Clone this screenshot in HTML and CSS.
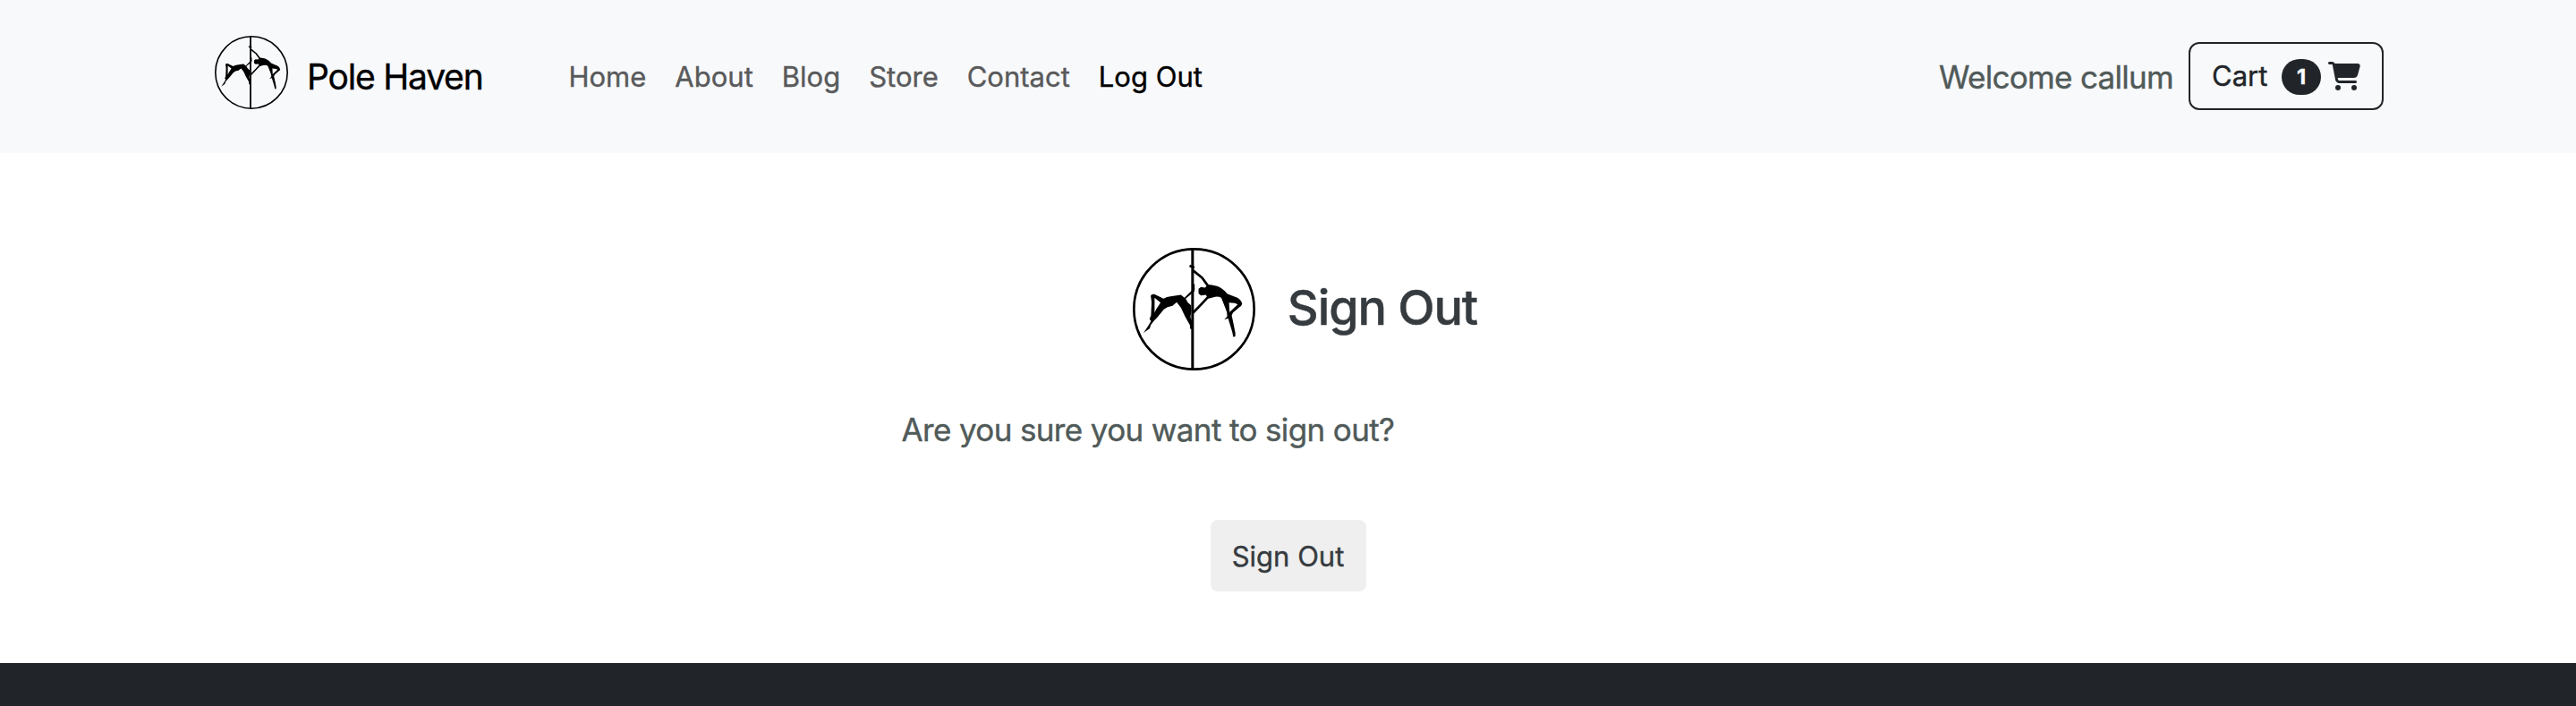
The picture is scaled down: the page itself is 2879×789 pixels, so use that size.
FILE: index.html
```html
<!DOCTYPE html>
<html lang="en">
<head>
<meta charset="utf-8">
<title>Pole Haven - Sign Out</title>
<link rel="stylesheet" href="styles.css">
</head>
<body>
<svg class="defs" aria-hidden="true">
  <symbol id="logo" viewBox="48 49 410 410">
    <circle cx="253" cy="254" r="201" fill="none" stroke="#000" stroke-width="8"/>
    <path d="M248 50V459" stroke="#000" stroke-width="9"/>
    <path d="M108 209Q110 203 120 204L151 219Q162 212 174 211L209 206 221 216 243 194 255 184 254 195 225 219Q230 233 243 241L244 260 241 280 247 305 248 320 242 320 239 307 223 279 209 249 195 231 181 243 164 247 152 255 128 284 121 291 108 307 105 318 84 333 100 309 109 294 104 287 109 275 111 230zM121 216v50l5-11 15-23z" fill-rule="evenodd"/>
    <path d="M298 172Q312 172 330 177 348 183 365 203L398 216Q410 222 414 236 413 242 404 248L383 266 379 275 384 298 391 333 391 345 384 347 381 331 367 285 354 289 364 278Q365 266 358 251L344 216Q332 210 318 214L301 219 292 206 276 208 268 202V186L276 180 290 182z M370 232l2 32 27-26-9-4z" fill-rule="evenodd"/>
    <path d="M250 125L280 149L301 178M302 211L275 240L250 266M238 109L254 115M251 170V190M244 290V320" fill="none" stroke="#000" stroke-width="8"/>
  </symbol>
</svg>
<header class="navbar">
  <a class="brand"><svg class="brand-logo"><use href="#logo"/></svg><span class="brand-name">Pole Haven</span></a>
  <nav class="links">
    <a>Home</a><a>About</a><a>Blog</a><a>Store</a><a>Contact</a><a class="active">Log Out</a>
  </nav>
  <div class="account">
    <span class="welcome">Welcome callum</span>
    <a class="cart"><span class="cart-label">Cart</span><span class="badge">1</span>
      <svg class="cart-icon" viewBox="0 0 576 512"><path d="M0 24C0 10.700 10.700 0 24 0h45.500c22 0 41.500 12.800 50.600 32h411c26.300 0 45.500 25 38.600 50.400l-41 152.300c-8.500 31.400-37 53.300-69.500 53.300H170.700l5.400 28.500c2.200 11.300 12.100 19.500 23.600 19.500H488c13.300 0 24 10.700 24 24s-10.700 24-24 24H199.700c-34.600 0-64.300-24.600-70.700-58.500L77.400 54.500c-.7-3.800-4-6.500-7.900-6.500H24C10.700 48 0 37.300 0 24zm128 440a48 48 0 1 1 96 0 48 48 0 1 1-96 0zm336-48a48 48 0 1 1 0 96 48 48 0 1 1 0-96z"/></svg></a>
  </div>
</header>
<main class="content">
  <div class="title"><svg class="title-logo"><use href="#logo"/></svg><h1>Sign Out</h1></div>
  <p class="question">Are you sure you want to sign out?</p>
  <button class="signout">Sign Out</button>
</main>
<footer class="footer"></footer>
</body>
</html>
```
FILE: styles.css
```css
* { box-sizing: border-box; }
body { margin: 0; height: 789px; overflow: hidden; display: flex; flex-direction: column; background: #fff; color: #212529; font-family: Inter, sans-serif; font-size: 31px; line-height: 48px; -webkit-text-stroke: 0.4px; }
.defs { position: absolute; width: 0; height: 0; }
.navbar { height: 171px; flex: none; display: flex; align-items: center; padding: 0 215px 0 240px; background: #f8f9fb; }
.brand { display: flex; align-items: center; color: #000; }
.brand-logo { width: 82px; height: 82px; margin: 0 21px 9px 0; }
.brand-name { font-size: 39px; letter-spacing: -1.2px; }
.links { display: flex; gap: 32px; margin-left: 96px; color: #595a5b; }
.active { color: #000; }
.account { margin-left: auto; display: flex; align-items: center; gap: 17px; }
.welcome { font-size: 35px; letter-spacing: -0.700px; color: #505a59; }
.cart { display: flex; align-items: center; height: 76px; width: 218px; margin-bottom: 1px; padding: 0 24px; border: 2px solid #212529; border-radius: 12px; }
.badge { width: 44px; height: 40px; margin: 2px 8px 0 auto; border-radius: 20px; background: #212529; color: #fff; font-size: 23.500px; font-weight: 700; line-height: 40px; text-align: center; }
.cart-icon { width: 36px; height: 32px; fill: #212529; }
.content { flex: 1; display: flex; flex-direction: column; align-items: center; padding-top: 106px; }
.title { display: flex; align-items: center; gap: 36px; padding-left: 38px; }
.title-logo { width: 137px; height: 137px; }
h1 { margin: 0 0 3px; font-size: 54px; font-weight: 500; letter-spacing: -1.100px; color: #363b3f; }
.question { margin: 42px 0 77px; width: 864px; font-size: 35px; letter-spacing: -0.630px; color: #505a59; }
.signout { border: 0; background: #efefef; border-radius: 8px; width: 174px; height: 80px; padding: 2px 0 0; font: inherit; color: #363b3f; }
.footer { flex: none; height: 48px; background: #212529; }
```
